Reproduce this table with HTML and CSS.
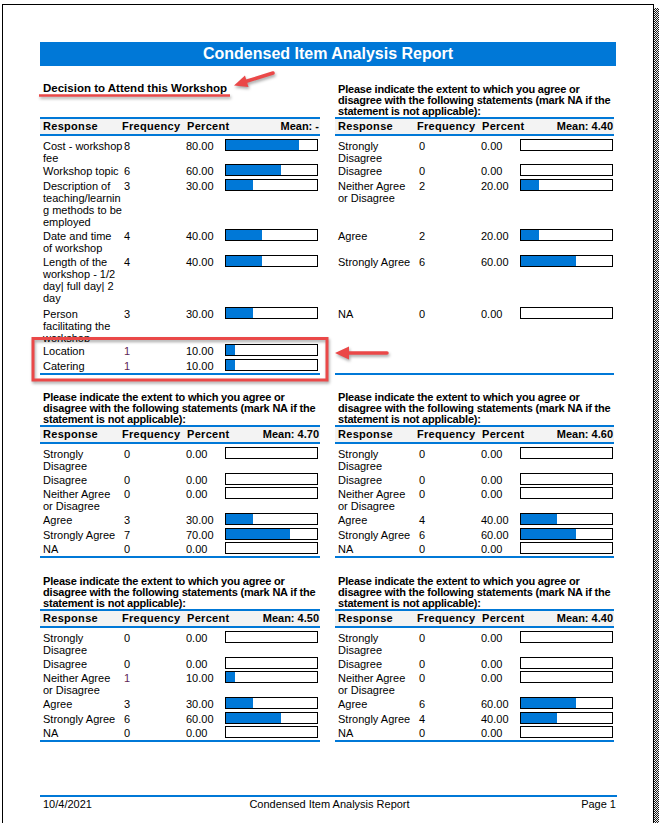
FILE: index.html
```html
<!DOCTYPE html>
<html lang="en">
<head>
<meta charset="utf-8">
<title>Condensed Item Analysis Report</title>
<link rel="stylesheet" href="styles.css">
</head>
<body>
<div class="sheet">
  <div class="page">
    <h1 class="title">Condensed Item Analysis Report</h1>

    <section class="band band-top">
      <div class="block">
        <h2 class="heading heading-single">Decision to Attend this Workshop</h2>
        <div class="thead"><span class="th">Response</span><span class="th">Frequency</span><span class="th-last"><span class="th">Percent</span><span class="mean">Mean: -</span></span></div>
        <div class="rows">
          <div class="row"><span class="c resp">Cost - workshop fee</span><span class="c num">8</span><span class="c">80.00</span><span class="bar"><span class="fill" style="width:80%"></span></span></div>
          <div class="row"><span class="c resp">Workshop topic</span><span class="c num">6</span><span class="c">60.00</span><span class="bar"><span class="fill" style="width:60%"></span></span></div>
          <div class="row"><span class="c resp">Description of teaching/learning methods to be employed</span><span class="c num">3</span><span class="c">30.00</span><span class="bar"><span class="fill" style="width:30%"></span></span></div>
          <div class="row"><span class="c resp">Date and time of workshop</span><span class="c num">4</span><span class="c">40.00</span><span class="bar"><span class="fill" style="width:40%"></span></span></div>
          <div class="row"><span class="c resp">Length of the workshop - 1/2 day| full day| 2 day</span><span class="c num">4</span><span class="c">40.00</span><span class="bar"><span class="fill" style="width:40%"></span></span></div>
          <div class="row clip"><span class="c resp">Person facilitating the workshop</span><span class="c num">3</span><span class="c">30.00</span><span class="bar"><span class="fill" style="width:30%"></span></span></div>
          <div class="row"><span class="c resp">Location</span><span class="c num alt">1</span><span class="c">10.00</span><span class="bar"><span class="fill" style="width:10%"></span></span></div>
          <div class="row"><span class="c resp">Catering</span><span class="c num alt">1</span><span class="c">10.00</span><span class="bar"><span class="fill" style="width:10%"></span></span></div>
        </div>
      </div>
      <div class="block">
        <h2 class="heading">Please indicate the extent to which you agree or disagree with the following statements (mark NA if the statement is not applicable):</h2>
        <div class="thead"><span class="th">Response</span><span class="th">Frequency</span><span class="th-last"><span class="th">Percent</span><span class="mean">Mean: 4.40</span></span></div>
        <div class="rows">
          <div class="row"><span class="c resp">Strongly Disagree</span><span class="c num">0</span><span class="c">0.00</span><span class="bar"><span class="fill" style="width:0%"></span></span></div>
          <div class="row"><span class="c resp">Disagree</span><span class="c num">0</span><span class="c">0.00</span><span class="bar"><span class="fill" style="width:0%"></span></span></div>
          <div class="row"><span class="c resp">Neither Agree or Disagree</span><span class="c num">2</span><span class="c">20.00</span><span class="bar"><span class="fill" style="width:20%"></span></span></div>
          <div class="row"><span class="c resp">Agree</span><span class="c num">2</span><span class="c">20.00</span><span class="bar"><span class="fill" style="width:20%"></span></span></div>
          <div class="row"><span class="c resp">Strongly Agree</span><span class="c num">6</span><span class="c">60.00</span><span class="bar"><span class="fill" style="width:60%"></span></span></div>
          <div class="row"><span class="c resp">NA</span><span class="c num">0</span><span class="c">0.00</span><span class="bar"><span class="fill" style="width:0%"></span></span></div>
        </div>
      </div>
    </section>

    <section class="band band-mid">
      <div class="block">
        <h2 class="heading">Please indicate the extent to which you agree or disagree with the following statements (mark NA if the statement is not applicable):</h2>
        <div class="thead"><span class="th">Response</span><span class="th">Frequency</span><span class="th-last"><span class="th">Percent</span><span class="mean">Mean: 4.70</span></span></div>
        <div class="rows">
          <div class="row"><span class="c resp">Strongly Disagree</span><span class="c num">0</span><span class="c">0.00</span><span class="bar"><span class="fill" style="width:0%"></span></span></div>
          <div class="row"><span class="c resp">Disagree</span><span class="c num">0</span><span class="c">0.00</span><span class="bar"><span class="fill" style="width:0%"></span></span></div>
          <div class="row"><span class="c resp">Neither Agree or Disagree</span><span class="c num">0</span><span class="c">0.00</span><span class="bar"><span class="fill" style="width:0%"></span></span></div>
          <div class="row"><span class="c resp">Agree</span><span class="c num">3</span><span class="c">30.00</span><span class="bar"><span class="fill" style="width:30%"></span></span></div>
          <div class="row"><span class="c resp">Strongly Agree</span><span class="c num">7</span><span class="c">70.00</span><span class="bar"><span class="fill" style="width:70%"></span></span></div>
          <div class="row"><span class="c resp">NA</span><span class="c num">0</span><span class="c">0.00</span><span class="bar"><span class="fill" style="width:0%"></span></span></div>
        </div>
      </div>
      <div class="block">
        <h2 class="heading">Please indicate the extent to which you agree or disagree with the following statements (mark NA if the statement is not applicable):</h2>
        <div class="thead"><span class="th">Response</span><span class="th">Frequency</span><span class="th-last"><span class="th">Percent</span><span class="mean">Mean: 4.60</span></span></div>
        <div class="rows">
          <div class="row"><span class="c resp">Strongly Disagree</span><span class="c num">0</span><span class="c">0.00</span><span class="bar"><span class="fill" style="width:0%"></span></span></div>
          <div class="row"><span class="c resp">Disagree</span><span class="c num">0</span><span class="c">0.00</span><span class="bar"><span class="fill" style="width:0%"></span></span></div>
          <div class="row"><span class="c resp">Neither Agree or Disagree</span><span class="c num">0</span><span class="c">0.00</span><span class="bar"><span class="fill" style="width:0%"></span></span></div>
          <div class="row"><span class="c resp">Agree</span><span class="c num">4</span><span class="c">40.00</span><span class="bar"><span class="fill" style="width:40%"></span></span></div>
          <div class="row"><span class="c resp">Strongly Agree</span><span class="c num">6</span><span class="c">60.00</span><span class="bar"><span class="fill" style="width:60%"></span></span></div>
          <div class="row"><span class="c resp">NA</span><span class="c num">0</span><span class="c">0.00</span><span class="bar"><span class="fill" style="width:0%"></span></span></div>
        </div>
      </div>
    </section>

    <section class="band band-bottom">
      <div class="block">
        <h2 class="heading">Please indicate the extent to which you agree or disagree with the following statements (mark NA if the statement is not applicable):</h2>
        <div class="thead"><span class="th">Response</span><span class="th">Frequency</span><span class="th-last"><span class="th">Percent</span><span class="mean">Mean: 4.50</span></span></div>
        <div class="rows">
          <div class="row"><span class="c resp">Strongly Disagree</span><span class="c num">0</span><span class="c">0.00</span><span class="bar"><span class="fill" style="width:0%"></span></span></div>
          <div class="row"><span class="c resp">Disagree</span><span class="c num">0</span><span class="c">0.00</span><span class="bar"><span class="fill" style="width:0%"></span></span></div>
          <div class="row"><span class="c resp">Neither Agree or Disagree</span><span class="c num alt">1</span><span class="c">10.00</span><span class="bar"><span class="fill" style="width:10%"></span></span></div>
          <div class="row"><span class="c resp">Agree</span><span class="c num">3</span><span class="c">30.00</span><span class="bar"><span class="fill" style="width:30%"></span></span></div>
          <div class="row"><span class="c resp">Strongly Agree</span><span class="c num">6</span><span class="c">60.00</span><span class="bar"><span class="fill" style="width:60%"></span></span></div>
          <div class="row"><span class="c resp">NA</span><span class="c num">0</span><span class="c">0.00</span><span class="bar"><span class="fill" style="width:0%"></span></span></div>
        </div>
      </div>
      <div class="block">
        <h2 class="heading">Please indicate the extent to which you agree or disagree with the following statements (mark NA if the statement is not applicable):</h2>
        <div class="thead"><span class="th">Response</span><span class="th">Frequency</span><span class="th-last"><span class="th">Percent</span><span class="mean">Mean: 4.40</span></span></div>
        <div class="rows">
          <div class="row"><span class="c resp">Strongly Disagree</span><span class="c num">0</span><span class="c">0.00</span><span class="bar"><span class="fill" style="width:0%"></span></span></div>
          <div class="row"><span class="c resp">Disagree</span><span class="c num">0</span><span class="c">0.00</span><span class="bar"><span class="fill" style="width:0%"></span></span></div>
          <div class="row"><span class="c resp">Neither Agree or Disagree</span><span class="c num">0</span><span class="c">0.00</span><span class="bar"><span class="fill" style="width:0%"></span></span></div>
          <div class="row"><span class="c resp">Agree</span><span class="c num">6</span><span class="c">60.00</span><span class="bar"><span class="fill" style="width:60%"></span></span></div>
          <div class="row"><span class="c resp">Strongly Agree</span><span class="c num">4</span><span class="c">40.00</span><span class="bar"><span class="fill" style="width:40%"></span></span></div>
          <div class="row"><span class="c resp">NA</span><span class="c num">0</span><span class="c">0.00</span><span class="bar"><span class="fill" style="width:0%"></span></span></div>
        </div>
      </div>
    </section>

    <footer class="footer">
      <span class="f-left">10/4/2021</span>
      <span class="f-mid">Condensed Item Analysis Report</span>
      <span class="f-right">Page 1</span>
    </footer>
  </div>
  <div class="shadow"></div>
</div>

<svg class="annot" width="659" height="823" viewBox="0 0 659 823" aria-hidden="true">
  <g class="mark">
    <line class="stroke" x1="39" y1="95.5" x2="230" y2="95.5"/>
    <line class="stroke shaft" x1="273" y1="73" x2="244" y2="82"/>
    <polygon class="head" points="234,85.5 248.5,87 245,75.5"/>
    <rect class="stroke box" x="33" y="338.5" width="294" height="41.5"/>
    <line class="stroke shaft" x1="387" y1="353" x2="346" y2="353"/>
    <polygon class="head" points="335,353 349,346.5 349,359.5"/>
  </g>
</svg>
</body>
</html>
```

FILE: styles.css
```css
* {
  box-sizing: border-box;
  margin: 0;
  padding: 0;
}

html,
body {
  overflow: hidden;
}

body {
  position: relative;
  width: 659px;
  height: 823px;
  background: #fff;
  color: #000;
  font-family: "Liberation Sans", Arial, sans-serif;
}

.sheet {
  display: flex;
  height: 823px;
  padding: 4px 0 0 2px;
}

.page {
  width: 652px;
  height: 819px;
  border: 1px solid #000;
  border-bottom: 0;
  padding: 37px 0 0 37px;
}

.shadow {
  width: 5px;
  margin-top: 4px;
  background: repeating-conic-gradient(#1a1a1a 0 25%, #f4f4f4 0 50%) 0 0 / 2px 2px;
}

.title {
  width: 576px;
  height: 24px;
  background: #0078d7;
  color: #fff;
  font-size: 16px;
  font-weight: bold;
  line-height: 24px;
  text-align: center;
}

.band {
  display: grid;
  grid-template-columns: 280px 279px;
  column-gap: 15px;
  margin-top: 17px;
}

.band-top {
  margin-top: 16px;
}

.band-bottom {
  margin-top: 18px;
}

.heading {
  height: 33px;
  overflow: hidden;
  padding-left: 3px;
  font-size: 11px;
  font-weight: bold;
  line-height: 11px;
  letter-spacing: -0.2px;
}

.band-top .heading {
  height: 35px;
  padding-top: 2px;
}

.band-top .heading-single {
  padding-top: 0;
  font-size: 11.5px;
  line-height: 12px;
  letter-spacing: 0;
}

.thead {
  display: grid;
  grid-template-columns: 82px 65px 1fr;
  height: 19px;
  border-top: 2px solid #0078d7;
  border-bottom: 2px solid #0078d7;
  background: #f3f3f3;
  font-size: 11px;
  font-weight: bold;
  line-height: 15px;
}

.th {
  letter-spacing: 0.3px;
}

.thead > .th:first-child {
  padding-left: 3px;
}

.th-last {
  display: flex;
  justify-content: space-between;
  padding-right: 1px;
}

.rows {
  display: grid;
  grid-template-rows: 26px 14px 26px 15px 14px 15px;
  padding: 1px 0;
  border-bottom: 2px solid #0078d7;
  font-size: 11px;
  line-height: 12px;
}

.band-top .rows {
  grid-template-rows: 25px 15px 50px 26px 52px 37px 15px 15px;
}

.row {
  display: grid;
  grid-template-columns: 83px 63px 39px 93px;
}

.row.clip {
  overflow: hidden;
}

.c {
  padding-top: 3px;
}

.resp {
  padding-left: 3px;
  overflow-wrap: anywhere;
}

.num {
  padding-left: 1px;
}

.alt {
  color: #5e1f57;
}

.bar {
  align-self: start;
  display: block;
  height: 12px;
  margin-top: 2px;
  border: 1px solid #000;
  background: #fff;
}

.fill {
  display: block;
  height: 100%;
  background: #0078d7;
}

.footer {
  display: grid;
  grid-template-columns: 1fr auto 1fr;
  width: 577px;
  margin-top: 53px;
  padding: 1px 1px 0 3px;
  border-top: 2px solid #0078d7;
  font-size: 11px;
  line-height: 12px;
}

.f-right {
  text-align: right;
}

.annot {
  position: absolute;
  left: 0;
  top: 0;
  pointer-events: none;
}

.mark {
  filter: drop-shadow(1px 2px 1.5px rgba(0, 0, 0, 0.35));
}

.stroke {
  fill: none;
  stroke: #ea4848;
  stroke-width: 2.5;
}

.shaft {
  stroke-width: 3.5;
  stroke-linecap: round;
}

.box {
  stroke-width: 3;
}

.head {
  fill: #ea4848;
}
```
